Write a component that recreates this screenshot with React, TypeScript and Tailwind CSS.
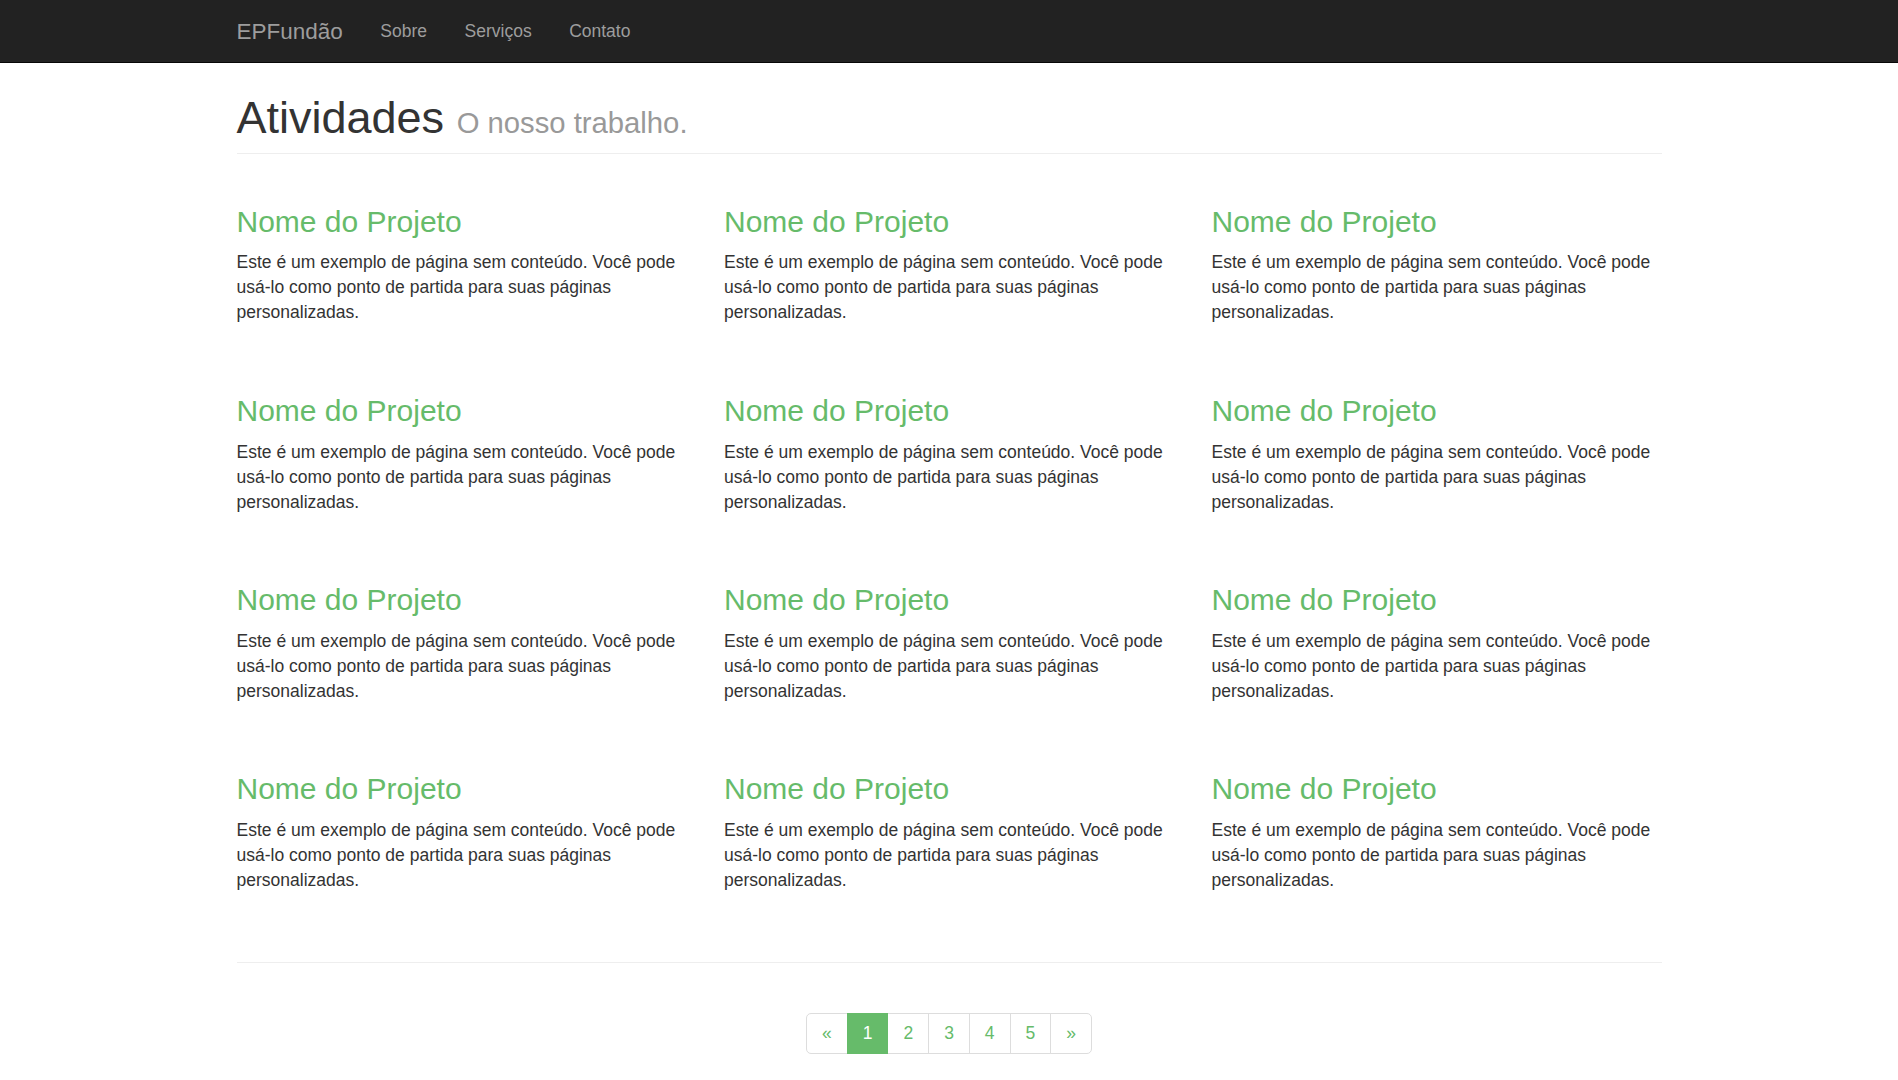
const projetos = Array.from({ length: 12 }, (_, i) => i);

const green = 'text-[#66bb6a]';

export default function App() {
  return (
    <div className="min-h-screen bg-white text-[#333] font-['Liberation_Sans',Arial,sans-serif] text-[17.5px] leading-[25px]">
      {/* Navbar */}
      <nav className="h-[63px] bg-[#222] border-b border-[#080808]">
        <div className="w-[1462.5px] mx-auto px-[18.75px] flex items-start">
          <a className="-ml-[18.75px] px-[18.75px] py-[18.75px] text-[22.5px] leading-[25px] text-[#9d9d9d]">EPFundão</a>
          <ul className="flex">
            {['Sobre', 'Serviços', 'Contato'].map(item => (
              <li key={item}>
                <a className="block px-[18.75px] py-[18.75px] text-[17.5px] leading-[25px] text-[#9d9d9d]">{item}</a>
              </li>
            ))}
          </ul>
        </div>
      </nav>

      <main className="w-[1462.5px] mx-auto px-[18.75px]">
        {/* Page header */}
        <div className="mt-[29.7px] pb-[11.25px] border-b border-[#eee]">
          <h1 className="text-[45px] leading-[49.5px] font-normal">
            Atividades <small className="text-[29.25px] leading-none text-[#999] font-normal">O nosso trabalho.</small>
          </h1>
        </div>

        {/* Projects */}
        <div className="mt-[50.4px] grid grid-cols-3 gap-x-[37.5px] gap-y-[68.7px]">
          {projetos.map(i => (
            <div key={i}>
              <h3 className={`text-[30px] leading-[33px] font-normal mb-[12.5px] ${green}`}>Nome do Projeto</h3>
              <p>
                Este é um exemplo de página sem conteúdo. Você pode usá-lo como ponto de partida para suas páginas personalizadas.
              </p>
            </div>
          ))}
        </div>

        <hr className="mt-[69.4px] border-t border-[#eee]" />

        {/* Pagination */}
        <div className="text-center pt-[50px] pb-[25px]">
          <ul className="inline-flex">
            {['«', '1', '2', '3', '4', '5', '»'].map((p, idx) => {
              const active = p === '1';
              return (
                <li key={p} className={idx === 0 ? '' : '-ml-px'}>
                  <a
                    className={`block px-[15px] py-[7px] leading-[25px] border ${
                      active ? 'bg-[#66bb6a] border-[#66bb6a] text-white relative z-10' : `bg-white border-[#ddd] ${green}`
                    } ${idx === 0 ? 'rounded-l-[5px]' : ''} ${idx === 6 ? 'rounded-r-[5px]' : ''}`}
                  >
                    {p}
                  </a>
                </li>
              );
            })}
          </ul>
        </div>
      </main>
    </div>
  );
}
